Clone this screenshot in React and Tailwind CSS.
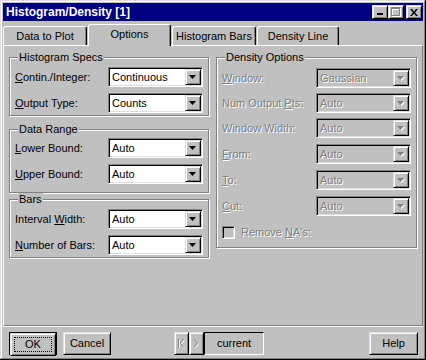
import React from "react";

const sunken =
  "border border-t-[#808080] border-l-[#808080] border-r-white border-b-white shadow-[inset_1px_1px_0_#000,inset_-1px_-1px_0_#dfdfdf]";
const raised =
  "border border-t-[#dfdfdf] border-l-[#dfdfdf] border-r-black border-b-black shadow-[inset_1px_1px_0_#fff,inset_-1px_-1px_0_#808080]";
const dim = "text-[#808080] [text-shadow:1px_1px_0_#fff]";

// down arrow used by the combo boxes
const Arrow = ({ disabled }) => (
  <svg width="8" height="5" viewBox="0 0 8 5" className="overflow-visible">
    {disabled && <path d="M1 1h7L4.5 5z" fill="#fff" />}
    <path d="M0 0h7L3.5 4z" fill={disabled ? "#808080" : "#000"} />
  </svg>
);

const Combo = ({ value, disabled }) => (
  <div
    className={`flex h-[20px] w-[95px] shrink-0 items-center p-[1px] ${sunken} ${
      disabled ? "bg-[#c0c0c0]" : "bg-white"
    }`}
  >
    <span className={`flex-1 pl-[2px] ${disabled ? dim : "text-black"}`}>{value}</span>
    <span className={`flex h-[16px] w-[16px] items-center justify-center bg-[#c0c0c0] ${raised}`}>
      <Arrow disabled={disabled} />
    </span>
  </div>
);

const Row = ({ label, value, disabled, labelW = "w-[93px]", className = "" }) => (
  <div className={`flex items-center ${className}`}>
    <span className={`${labelW} ${disabled ? dim : "text-black"}`}>{label}</span>
    <Combo value={value} disabled={disabled} />
  </div>
);

const Group = ({ title, className, children }) => (
  <div
    className={`relative border border-[#808080] shadow-[inset_1px_1px_0_#fff,1px_1px_0_#fff] ${className}`}
  >
    <span className="absolute -top-[7px] left-[8px] bg-[#c0c0c0] px-[1px] leading-[13px] text-black">
      {title}
    </span>
    {children}
  </div>
);

const Tab = ({ label, active, className }) =>
  active ? (
    <div
      className={`relative z-10 -mb-px flex h-[22px] items-center justify-center rounded-t-[3px] border-t border-l border-r border-t-white border-l-white border-r-black bg-[#c0c0c0] pb-[2px] shadow-[inset_-1px_0_0_#808080] ${className}`}
    >
      {label}
    </div>
  ) : (
    <div
      className={`flex h-[19px] items-center justify-center rounded-t-[3px] border-t border-l border-r border-t-white border-l-white border-r-black shadow-[inset_-1px_0_0_#808080] ${className}`}
    >
      {label}
    </div>
  );

const Button = ({ children, className }) => (
  <button className={`flex h-[23px] items-center justify-center bg-[#c0c0c0] text-black ${raised} ${className}`}>
    {children}
  </button>
);

const App = () => {
  return (
    <div className="h-[360px] w-[426px] bg-[#c0c0c0] p-[3px] font-['Liberation_Sans',Arial,sans-serif] text-[11px] leading-none shadow-[inset_-1px_-1px_0_#000,inset_1px_1px_0_#dfdfdf,inset_-2px_-2px_0_#808080,inset_2px_2px_0_#fff]">
      <div className="flex h-full flex-col">
        {/* Title bar */}
        <div className="flex h-[18px] items-center bg-[#000080] pl-[3px] pr-[1px]">
          <span className="flex-1 text-[12px] font-bold text-white">Histogram/Density [1]</span>
          <div className={`flex h-[14px] w-[16px] items-end bg-[#c0c0c0] pb-[3px] pl-[4px] ${raised}`}>
            <span className="h-[2px] w-[6px] bg-black" />
          </div>
          <div className={`flex h-[14px] w-[16px] items-center justify-center bg-[#c0c0c0] ${raised}`}>
            <svg width="10" height="10" viewBox="0 0 10 10">
              <path d="M1.5 1.5h8v8h-8zM1.5 2.5h8" fill="none" stroke="#fff" />
              <path d="M.5.5h8v8h-8zM.5 1.5h8" fill="none" stroke="#808080" />
            </svg>
          </div>
          <div className={`ml-[2px] flex h-[14px] w-[16px] items-center justify-center bg-[#c0c0c0] ${raised}`}>
            <svg width="8" height="7" viewBox="0 0 8 7">
              <path d="M0 0h2l2 2.5L6 0h2L5 3.5 8 7H6L4 4.5 2 7H0l3-3.5z" fill="#000" />
            </svg>
          </div>
        </div>

        {/* Tabs */}
        <div className="mt-[1px] flex h-[23px] items-end">
          <Tab label="Data to Plot" className="w-[84px]" />
          <Tab label="Options" active className="ml-[1px] w-[83px]" />
          <Tab label="Histogram Bars" className="ml-[1px] w-[84px]" />
          <Tab label="Density Line" className="ml-[1px] w-[82px]" />
        </div>

        {/* Tab panel */}
        <div className="flex flex-1 gap-[7px] border-t border-l border-r border-b border-t-white border-l-white border-r-[#808080] border-b-[#808080] pl-[5px] pt-[11px] shadow-[0_1px_0_#fff]">
          <div className="flex w-[200px] flex-col">
            <Group title="Histogram Specs" className="flex flex-col gap-[6px] pb-[2px] pl-[5px] pt-[9px]">
              <Row label={<><u>C</u>ontin./Integer:</>} value="Continuous" />
              <Row label={<><u>O</u>utput Type:</>} value="Counts" />
            </Group>
            <Group title="Data Range" className="mt-[13px] flex flex-col gap-[6px] pb-[8px] pl-[5px] pt-[8px]">
              <Row label={<><u>L</u>ower Bound:</>} value="Auto" />
              <Row label={<><u>U</u>pper Bound:</>} value="Auto" />
            </Group>
            <Group title="Bars" className="mt-[6px] flex flex-col gap-[6px] pb-[2px] pl-[5px] pt-[9px]">
              <Row label={<>Interval <u>W</u>idth:</>} value="Auto" />
              <Row label={<><u>N</u>umber of Bars:</>} value="Auto" />
            </Group>
          </div>

          <div className="w-[201px]">
            <Group title="Density Options" className="flex flex-col pb-[8px] pl-[5px] pt-[10px]">
              <Row labelW="w-[94px]" disabled label={<><u>W</u>indow:</>} value="Gaussian" />
              <Row labelW="w-[94px]" className="mt-[5px]" disabled label={<>Num Output <u>P</u>ts:</>} value="Auto" />
              <Row labelW="w-[94px]" className="mt-[5px]" disabled label="Window Width:" value="Auto" />
              <Row labelW="w-[94px]" className="mt-[6px]" disabled label={<><u>F</u>rom:</>} value="Auto" />
              <Row labelW="w-[94px]" className="mt-[6px]" disabled label={<><u>T</u>o:</>} value="Auto" />
              <Row labelW="w-[94px]" className="mt-[6px]" disabled label={<><u>C</u>ut:</>} value="Auto" />
              <div className="mt-[10px] flex items-center">
                <span className={`h-[13px] w-[13px] bg-[#c0c0c0] ${sunken}`} />
                <span className={`ml-[6px] ${dim}`}>
                  Remove <u>N</u>A's:
                </span>
              </div>
            </Group>
          </div>
        </div>

        {/* Bottom buttons */}
        <div className="flex h-[31px] items-start pl-[6px] pr-[5px] pt-[6px]">
          <div className="h-[23px] w-[48px] border border-black">
            <Button className="h-[21px] w-full">
              <span className="flex h-[15px] w-[38px] items-center justify-center border border-dotted border-black">
                OK
              </span>
            </Button>
          </div>
          <Button className="ml-[6px] w-[48px]">Cancel</Button>
          <Button className="ml-[63px] w-[15px]">
            <svg width="7" height="9" viewBox="0 0 7 9">
              <path d="M1.5 1v9M6.5 1l-3.5 4 3.5 4" fill="none" stroke="#fff" />
              <path d="M.5 0v9M5.5 0L2 4l3.5 4" fill="none" stroke="#808080" />
            </svg>
          </Button>
          <Button className="w-[15px]">
            <svg width="5" height="9" viewBox="0 0 5 9">
              <path d="M1 1l3.5 4L1 9" fill="none" stroke="#fff" />
              <path d="M0 0l3.5 4L0 8" fill="none" stroke="#808080" />
            </svg>
          </Button>
          <div className="flex h-[23px] w-[60px] items-center justify-center border border-t-black border-l-black border-r-white border-b-white text-black">
            current
          </div>
          <Button className="ml-auto w-[49px]">Help</Button>
        </div>
      </div>
    </div>
  );
};

export default App;
